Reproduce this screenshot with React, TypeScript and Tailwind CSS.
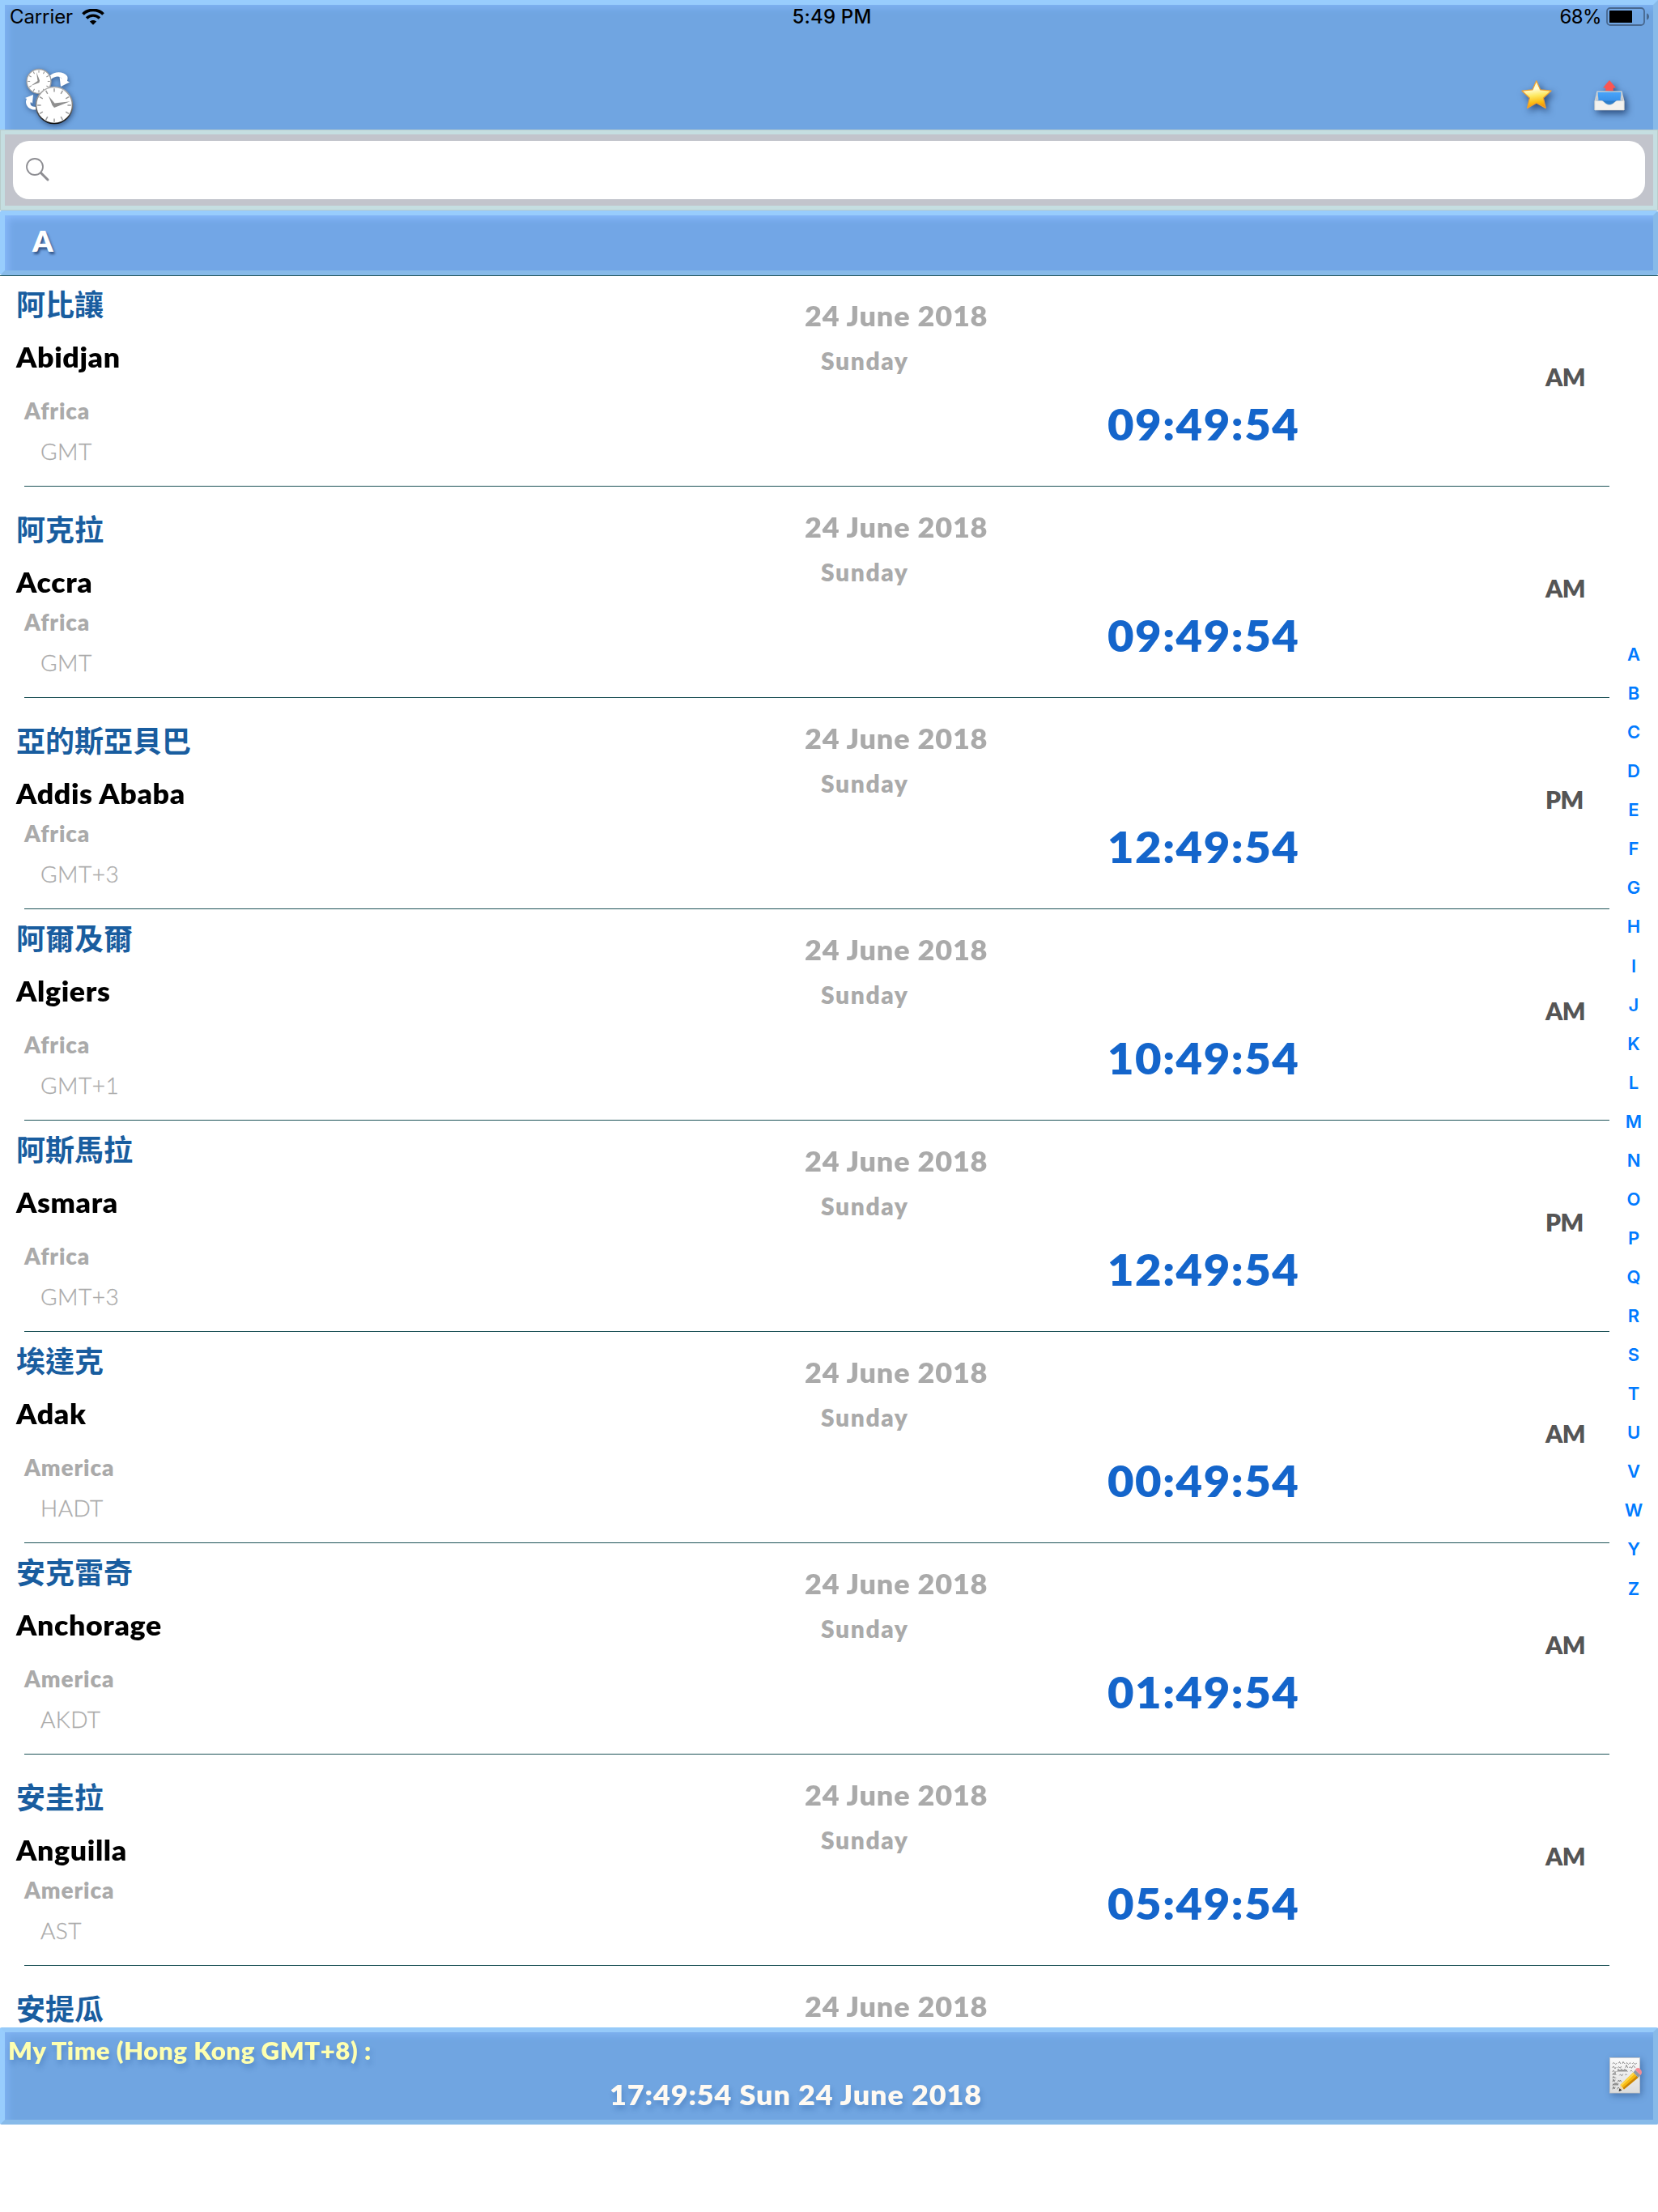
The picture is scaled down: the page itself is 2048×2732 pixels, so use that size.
import React from 'react';

type City = { zh: string; name?: string; region?: string; zone?: string; time?: string; period?: string; low?: boolean };

const CITIES: City[] = [
  { zh: '阿比讓', name: 'Abidjan', region: 'Africa', zone: 'GMT', time: '09:49:54', period: 'AM' },
  { zh: '阿克拉', name: 'Accra', region: 'Africa', zone: 'GMT', time: '09:49:54', period: 'AM', low: true },
  { zh: '亞的斯亞貝巴', name: 'Addis Ababa', region: 'Africa', zone: 'GMT+3', time: '12:49:54', period: 'PM', low: true },
  { zh: '阿爾及爾', name: 'Algiers', region: 'Africa', zone: 'GMT+1', time: '10:49:54', period: 'AM' },
  { zh: '阿斯馬拉', name: 'Asmara', region: 'Africa', zone: 'GMT+3', time: '12:49:54', period: 'PM' },
  { zh: '埃達克', name: 'Adak', region: 'America', zone: 'HADT', time: '00:49:54', period: 'AM' },
  { zh: '安克雷奇', name: 'Anchorage', region: 'America', zone: 'AKDT', time: '01:49:54', period: 'AM' },
  { zh: '安圭拉', name: 'Anguilla', region: 'America', zone: 'AST', time: '05:49:54', period: 'AM', low: true },
  { zh: '安提瓜', low: true },
];

const LETTERS = 'ABCDEFGHIJKLMNOPQRSTUVWYZ'.split('');

function Ticks({ cx, cy, r, len, w }: { cx: number; cy: number; r: number; len: number; w: number }) {
  return (
    <g stroke="#9a9a9a" strokeWidth={w}>
      {Array.from({ length: 12 }, (_, i) => (
        <line key={i} x1={cx} y1={cy - r} x2={cx} y2={cy - r + len} transform={`rotate(${i * 30} ${cx} ${cy})`} />
      ))}
    </g>
  );
}

function ClocksIcon() {
  return (
    <svg width="72" height="80" viewBox="24 78 72 80" className="drop-shadow-[1px_2px_3px_rgba(0,20,60,0.5)]">
      <defs>
        <linearGradient id="rim" x1="0" y1="0" x2="0" y2="1">
          <stop offset="0" stopColor="#b5b5b5" />
          <stop offset="0.55" stopColor="#777" />
          <stop offset="1" stopColor="#111" />
        </linearGradient>
      </defs>
      <path d="M62 93 C68 87.500 79 88 83 94 C84 96 83.500 98 83 100 L86 101.500 L75 107 L73.500 94.500 L76.500 97.500 C75 93.500 68 93 63 98 Z" fill="#fff" />
      <path d="M31 121 L41 117 L40 128 L38 126 C36.500 129 39 132 44 132 L45 135.500 C37 136.500 31.500 131 32 125 L33 122 Z" fill="#fff" />
      <circle cx="48" cy="100.500" r="15" fill="#fff" stroke="#a0a0a0" strokeWidth="1.300" />
      <Ticks cx={48} cy={100.5} r={13.8} len={3} w={1.1} />
      <path d="M45 89 L49 99.500 L48.500 102 L38 106 L46.500 100 Z" fill="#8c8c8c" />
      <circle cx="67" cy="130" r="22.500" fill="#fff" stroke="url(#rim)" strokeWidth="1.600" />
      <Ticks cx={67} cy={130} r={20.8} len={4.4} w={1.5} />
      <path d="M60 118.500 L67.500 127.500 L86.500 125.200 L67 133 L64.500 130 Z" fill="#8f8f8f" />
    </svg>
  );
}

function StarIcon() {
  return (
    <svg width="40" height="38" viewBox="0 0 40 38" className="drop-shadow-[3px_4px_4px_rgba(0,20,60,0.6)]">
      <defs>
        <linearGradient id="gold" x1="0" y1="0" x2="0.150" y2="1">
          <stop offset="0" stopColor="#fff6a8" />
          <stop offset="0.350" stopColor="#fffdd8" />
          <stop offset="0.600" stopColor="#fde860" />
          <stop offset="0.850" stopColor="#fbbb12" />
          <stop offset="1" stopColor="#f39a0c" />
        </linearGradient>
      </defs>
      <path d="M19.800 1.800 L24.600 12.800 L38 14.200 L28.400 23 L31.200 35.500 L19.900 29.200 L8.600 35.500 L11.400 23 L2 14.200 L15.100 12.800 Z" fill="url(#gold)" stroke="#f0a030" strokeWidth="1.200" strokeLinejoin="round" />
    </svg>
  );
}

function OutboxIcon() {
  return (
    <svg width="40" height="40" viewBox="0 0 40 40" className="drop-shadow-[3px_4px_4px_rgba(0,20,60,0.6)]">
      <defs>
        <linearGradient id="well" x1="0" y1="0" x2="0" y2="1">
          <stop offset="0" stopColor="#4aa4fa" />
          <stop offset="0.600" stopColor="#3a92ea" />
          <stop offset="0.650" stopColor="#2b7cc8" />
          <stop offset="1" stopColor="#2f86d6" />
        </linearGradient>
      </defs>
      <path d="M4.500 14.500 H35.500 L38.500 27 V38 H1.500 V27 Z" fill="#d9d9d4" />
      <path d="M5.500 15.800 H34.500 L37 27 L27 33 H14 L3 27 Z" fill="url(#well)" />
      <path d="M2.500 27 L5.500 15.800 L6.500 25.500 Z M37.500 27 L34.500 15.800 L33.500 25.500 Z" fill="#c9ccd0" />
      <path d="M2 26.500 H10 C13.500 26.500 14 31 20 31.500 C26 31 26.500 26.500 30 26.500 H38 V38 H2 Z" fill="#f3f2ee" stroke="#d8d7d2" strokeWidth="0.600" />
      <path d="M20 1 L28 10.500 H24.800 V14 H15.200 V10.500 H12 Z" fill="#fb5552" />
    </svg>
  );
}

function MemoIcon() {
  return (
    <svg width="44" height="48" viewBox="0 0 44 48" className="drop-shadow-[2px_3px_4px_rgba(0,30,80,0.35)]">
      <defs>
        <linearGradient id="sheet" x1="0" y1="0" x2="0" y2="1">
          <stop offset="0" stopColor="#fbfbfb" />
          <stop offset="1" stopColor="#dcdcdc" />
        </linearGradient>
      </defs>
      <rect x="1.500" y="1.500" width="37" height="43.500" fill="url(#sheet)" stroke="#c4c4c4" strokeWidth="0.800" />
      <g fill="none" stroke="#777" strokeWidth="0.850" strokeLinecap="round">
        <path d="M5 8.500 q1.500 -2 2.500 0 t2.500 0 M12.500 8 l1 -1.500 1 2 M17 8.500 l1 -2 1.500 2 M21.500 8.500 q1 -2 2 0 t2 0 2 0 M29.500 8.500 q1 -2 2 0 t3 0" />
        <path d="M5 13.500 q1 -3 2 0 t2 0 M11.500 13.500 q1 -2 2 0 t2 -1 M21 13.500 l1 -3 1.500 3 M25.500 13.500 q1 -2 2 0 t2 -1 3 1" />
        <path d="M5 18.500 q1 -3 2 0 t2 0 M11 18.500 l1 -3 1 3 1 -2 1 2 1 -3 1 3 1 -2 1 2 1 -3 1 3 1 -2 1 2 M27 18 q1 -2 2 0" />
        <path d="M5 22.500 l1 -2 1 2 1 -2 1 2 M13.500 23 q1 -2 2 0 t2 -1 M20.500 22.500 q1 -2 2 0" />
        <path d="M5 26.500 l1 -2 1 2 q1 -2 2 0" />
        <path d="M5 31 l1 -3 1 3 1 -2 M11.500 31 l1 -2 1 2 1 -2 1 2" />
        <path d="M5 35.500 l1 -2 1 2 1 -3 1 3 1 -3 1 3 1 -2 M5 40 l1 -3 1 3 1 -2 M11 40 l1 -2 1 1" />
      </g>
      <path d="M13 42.500 L14.500 35 L19 40.500 Z" fill="#f0d8ac" />
      <path d="M12.500 43 L13.600 39.300 L16.300 41.700 Z" fill="#2c2a28" />
      <path d="M14.500 35 L30.500 19.500 L36.500 26 L19 40.500 Z" fill="#f7b80f" />
      <path d="M14.500 35 L30.500 19.500 L32.300 21.500 L16 36.800 Z" fill="#fdd648" />
      <path d="M17.600 38.800 L34.700 24 L36.500 26 L19 40.500 Z" fill="#c98408" />
      <path d="M30.500 19.500 L33 16.500 L39.500 23 L36.500 26 Z" fill="#8f99a5" />
      <path d="M33 16.500 C34.500 13.500 37 13.500 39 15.500 C41 17.500 42 20 39.500 23 Z" fill="#f28d95" />
    </svg>
  );
}

function WifiIcon() {
  return (
    <svg width="28" height="20" viewBox="0 0 28 20" fill="none" stroke="#000">
      <path d="M1.500 6.500 C8 -0.300 20 -0.300 26.500 6.500" strokeWidth="3.600" />
      <path d="M6 11.500 C10.500 7 17.500 7 22 11.500" strokeWidth="3.400" />
      <path d="M14 19.800 L9.800 15.600 C12 13.400 16 13.400 18.200 15.600 Z" fill="#000" stroke="none" />
    </svg>
  );
}

function BatteryIcon() {
  return (
    <svg width="54" height="24" viewBox="0 0 54 24">
      <rect x="1" y="1" width="46" height="21" rx="4" fill="none" stroke="#48688f" strokeWidth="1.800" />
      <rect x="4" y="4" width="28" height="15" rx="0.500" fill="#000" />
      <path d="M50 7.500 C54 8.500 54 14.500 50 15.500 Z" fill="#48688f" />
    </svg>
  );
}

function Row({ c }: { c: City }) {
  return (
    <div className="flex h-[261px] shrink-0">
      <div className="ml-[30px] flex w-[1958px] border-b border-[#1d5257]">
        <div className="-ml-[10px] flex w-[974px] flex-col">
          <div className={c.low ? 'h-[151px] pt-[33px]' : 'h-[151px] pt-[16px]'}>
            <div className="font-['Noto_Sans_CJK_TC','Noto_Sans',sans-serif] text-[36px] leading-[36px] font-bold text-[#195d9f]">{c.zh}</div>
            {c.name && <div className="mt-[29px] origin-left scale-x-[1.05] text-[34px] leading-[40px] font-extrabold tracking-[0.6px] text-black">{c.name}</div>}
          </div>
          {c.region && <div className="pl-[10px] text-[28px] leading-[32px] font-extrabold tracking-[0.9px] text-[#aaaaaa]">{c.region}</div>}
          {c.zone && <div className="mt-[18px] pl-[30px] text-[28px] leading-[32px] font-light tracking-[0.5px] text-[#aaaaaa] [-webkit-text-stroke:0.3px_#aaaaaa]">{c.zone}</div>}
        </div>
        <div className="w-[374px] pt-[30px] text-[#aaaaaa]">
          <div className="origin-left scale-x-[1.06] text-[34px] leading-[40px] font-extrabold tracking-[0.75px]">24 June 2018</div>
          {c.time && <div className="mt-[17px] pl-[20px] text-[30px] leading-[36px] font-extrabold tracking-[1.6px]">Sunday</div>}
        </div>
        <div className="w-[541px] pt-[154px]">
          {c.time && <div className="origin-left scale-x-[1.08] text-[52px] leading-[60px] font-extrabold tracking-[1.4px] text-[#1465cb]">{c.time}</div>}
        </div>
        <div className="pt-[107px] text-[30px] leading-[36px] font-extrabold tracking-[-0.5px] text-[#555555]">{c.period}</div>
      </div>
    </div>
  );
}

export default function App() {
  return (
    <div className="flex h-[2732px] w-[2048px] flex-col overflow-hidden bg-white font-['Lato',sans-serif]">
      <header className="flex h-[160px] shrink-0 flex-col border-x-[6px] border-t-[6px] border-t-[#98cdfd] border-r-[#87bae9] border-l-[#98cdfd] bg-[#70a5e1] shadow-[inset_8px_8px_8px_-4px_#7fb2f2]">
        <div className="-mt-[3px] grid h-[36px] grid-cols-3 items-center font-['Inter',sans-serif] text-[24px] leading-[36px] text-black">
          <div className="flex items-center gap-[11px] pl-[6px]">
            <span className="tracking-[-0.1px]">Carrier</span>
            <WifiIcon />
          </div>
          <div className="pl-[7px] text-center font-medium tracking-[0.2px]">5:49 PM</div>
          <div className="flex items-center justify-end gap-[6px] pr-[4px]">
            <span className="tracking-[-0.6px]">68%</span>
            <BatteryIcon />
          </div>
        </div>
        <div className="flex flex-1 items-start justify-between pt-[39px] pl-[18px]">
          <ClocksIcon />
          <div className="flex gap-[50px] pt-[20px] pr-[34px]">
            <StarIcon />
            <OutboxIcon />
          </div>
        </div>
      </header>

      <div className="h-[100px] shrink-0 border-[6px] border-[#c5dee1] bg-[#c2c4cc] px-[10px] pt-[8px] outline-1 -outline-offset-1 outline-[#b9cccc]">
        <div className="flex h-[72px] items-center rounded-[20px] bg-white pl-[16px]">
          <svg width="30" height="30" viewBox="0 0 30 30" fill="none" stroke="#8e8e93" className="-mt-[1px]">
            <circle cx="11" cy="11" r="10" strokeWidth="1.800" />
            <path d="M18.500 18.500 L27 27" strokeWidth="3" strokeLinecap="round" />
          </svg>
        </div>
      </div>

      <div className="flex h-[80px] shrink-0 items-center rounded-[3px] border-[6px] border-t-[#98cdfd] border-r-[#87bae9] border-b-[#87bae9] border-l-[#98cdfd] bg-[#72a6e6] pb-[7px] pl-[34px] text-[36px] leading-none font-extrabold text-white shadow-[inset_8px_8px_8px_-4px_#86b8fa]">
        <span className="[text-shadow:2px_3px_3px_rgba(0,20,60,0.55)]">A</span>
      </div>

      <div className="flex h-[2164px] shrink-0 overflow-hidden border-t border-[#1d5257]">
        <div className="-mt-px flex w-[1988px] flex-col">
          {CITIES.map((c) => (
            <Row key={c.zh} c={c} />
          ))}
        </div>
        <div className="flex w-[60px] flex-col items-center pt-[443px] font-['Inter',sans-serif] text-[22px] font-semibold text-[#007aff]">
          {LETTERS.map((l) => (
            <div key={l} className="h-[48.070px] leading-[48px]">
              {l}
            </div>
          ))}
        </div>
      </div>

      <footer className="flex h-[120px] shrink-0 justify-between rounded-[2px] border-[6px] border-t-[#96caf9] border-r-[#87bae9] border-b-[#87bae9] border-l-[#98cdfd] bg-[#70a5e1] shadow-[inset_8px_8px_8px_-4px_#7fb2f2]">
        <div className="flex flex-col items-start">
          <div className="mt-[4px] ml-[4px] origin-left scale-x-[1.04] text-[30px] leading-[36px] font-extrabold tracking-[0.5px] text-[#feffb0] [text-shadow:2px_5px_6px_rgba(30,80,150,0.3)]">My Time (Hong Kong GMT+8) :</div>
          <div className="mt-[17px] ml-[747px] origin-left scale-x-[1.06] text-[34px] leading-[40px] font-extrabold tracking-[0.8px] text-[#fffaf2] [text-shadow:2px_5px_6px_rgba(30,80,150,0.3)]">17:49:54 Sun 24 June 2018</div>
        </div>
        <div className="pt-[30px] pr-[11px]">
          <MemoIcon />
        </div>
      </footer>
    </div>
  );
}
